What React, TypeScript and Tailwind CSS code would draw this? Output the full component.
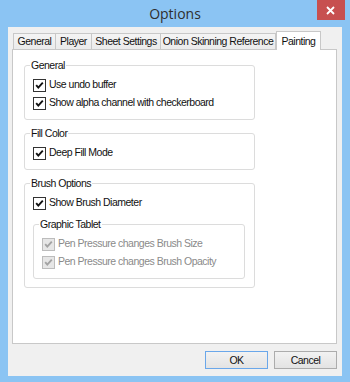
import React from 'react';

const Check = ({ label, disabled = false }: { label: string; disabled?: boolean }) => (
  <div className="h-[18px] flex items-center gap-[3px] whitespace-nowrap">
    <span
      className={`w-[13px] h-[13px] shrink-0 border flex items-center justify-center ${
        disabled ? 'border-[#bcbcbc] bg-[#e6e6e6]' : 'border-[#333333] bg-white'
      }`}
    >
      <svg width="11" height="11" viewBox="0 0 11 11">
        <polyline
          points="2.2,5.2 4.3,7.6 8.8,2.6"
          fill="none"
          stroke={disabled ? '#a3a3a3' : '#111111'}
          strokeWidth="1.9"
        />
      </svg>
    </span>
    <span className={disabled ? 'text-[#8a8a8a]' : 'text-[#111111]'}>{label}</span>
  </div>
);

const Group = ({
  title,
  className = '',
  children,
}: {
  title: string;
  className?: string;
  children: React.ReactNode;
}) => (
  <fieldset className={`border border-[#dcdcdc] rounded-[3px] pl-[8px] pt-[4px] pb-[7px] ${className}`}>
    <legend className="-ml-[3px] px-[1px] leading-[13px] text-[#111111] whitespace-nowrap">{title}</legend>
    {children}
  </fieldset>
);

export default function App() {
  const tabs = [
    { name: 'General', w: 'w-[42px]' },
    { name: 'Player', w: 'w-[36px]' },
    { name: 'Sheet Settings', w: 'w-[69px]' },
    { name: 'Onion Skinning Reference', w: 'w-[116px]' },
  ];

  return (
    <div className="w-[350px] h-[382px] bg-[#8bc4f3] flex flex-col font-['Liberation_Sans',Arial,sans-serif] text-[10.5px] tracking-[-0.5px] overflow-hidden">
      {/* title bar */}
      <div className="h-[27px] grid grid-cols-3 items-start">
        <div />
        <div className="h-[26px] flex items-center justify-center font-['Open_Sans',sans-serif] text-[14px] tracking-normal text-[#2f2f2f]">
          Options
        </div>
        <div className="flex justify-end pr-[5px]">
          <div className="w-[28px] h-[20px] bg-[#c75050] flex items-center justify-center">
            <svg width="9" height="9" viewBox="0 0 9 9">
              <path d="M1 1 L8 8 M8 1 L1 8" stroke="white" strokeWidth="1.8" />
            </svg>
          </div>
        </div>
      </div>

      {/* client area */}
      <div className="mx-[8px] h-[349px] bg-[#f0f0f0] flex flex-col pl-[4px] pr-[5px] pt-[4px]">
        <div className="h-[18px] flex items-end pl-[1px]">
          {tabs.map((t, i) => (
            <div
              key={t.name}
              className={`${t.w} h-[16px] whitespace-nowrap border-t border-l border-[#c8c8c8] bg-gradient-to-b from-[#f4f4f4] to-[#ebebeb] flex items-center justify-center text-[#111111] ${
                i === tabs.length - 1 ? 'border-r' : ''
              }`}
            >
              {t.name}
            </div>
          ))}
          <div className="relative z-10 -mb-px w-[45px] h-[19px] whitespace-nowrap border-t border-l border-r border-[#c8c8c8] bg-white flex items-start justify-center pt-[2px] text-[#111111]">
            Painting
          </div>
        </div>

        <div className="h-[295px] bg-white border border-[#c8c8c8] pl-[11px] pt-[9px] flex flex-col gap-[7px]">
          <Group title="General" className="w-[231px]">
            <Check label="Use undo buffer" />
            <Check label="Show alpha channel with checkerboard" />
          </Group>
          <Group title="Fill Color" className="w-[231px]">
            <Check label="Deep Fill Mode" />
          </Group>
          <Group title="Brush Options" className="w-[231px] pb-[8px]">
            <Check label="Show Brush Diameter" />
            <Group title="Graphic Tablet" className="w-[212px] mt-[6px] pl-[7px]">
              <Check label="Pen Pressure changes Brush Size" disabled />
              <Check label="Pen Pressure changes Brush Opacity" disabled />
            </Group>
          </Group>
        </div>

        <div className="flex justify-end gap-[6px] pt-[7px]">
          <button className="w-[63px] h-[18px] border border-[#6aa7ea] bg-gradient-to-b from-[#f2f2f2] to-[#e3e3e3] text-[#111111] leading-none">
            OK
          </button>
          <button className="w-[63px] h-[18px] border border-[#acacac] bg-gradient-to-b from-[#f2f2f2] to-[#e3e3e3] text-[#111111] leading-none">
            Cancel
          </button>
        </div>
      </div>
    </div>
  );
}
